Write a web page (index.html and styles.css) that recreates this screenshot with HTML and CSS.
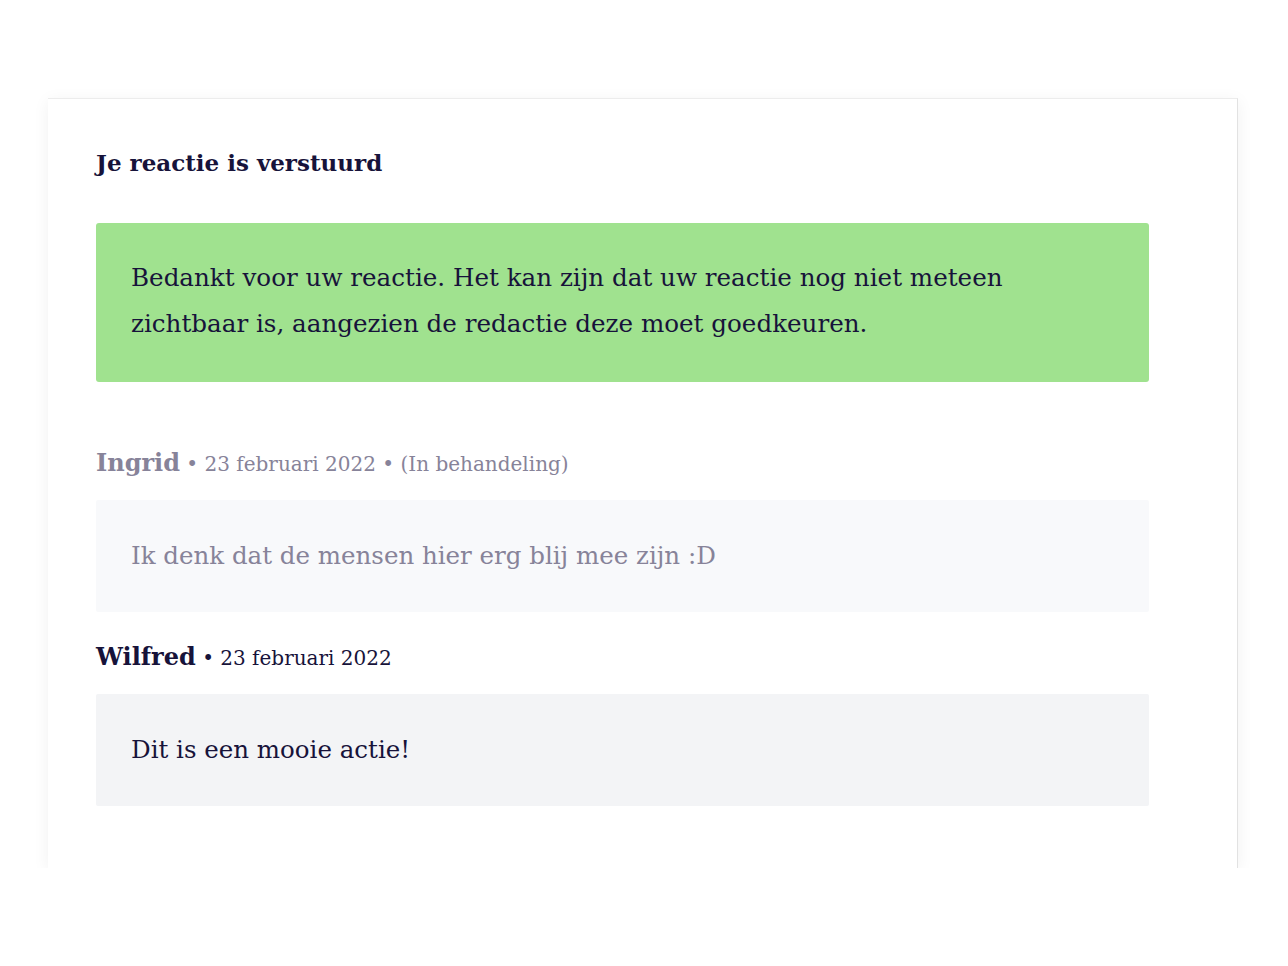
FILE: index.html
```html
<!DOCTYPE html>
<html lang="nl">
<head>
    <meta charset="UTF-8">
    <meta name="viewport" content="width=device-width, initial-scale=1.0">
    <title>Reacties</title>
    <link rel="stylesheet" href="styles.css">
</head>
<body>
    <div class="card">
        <h2 class="card-title">Je reactie is verstuurd</h2>

        <div class="notice">
            <p>Bedankt voor uw reactie. Het kan zijn dat uw reactie nog niet meteen zichtbaar is, aangezien de redactie deze moet goedkeuren.</p>
        </div>

        <div class="comment pending">
            <div class="comment-meta">
                <span class="author">Ingrid</span> &bull; 23 februari 2022 &bull; (In behandeling)
            </div>
            <div class="comment-body">Ik denk dat de mensen hier erg blij mee zijn :D</div>
        </div>

        <div class="comment">
            <div class="comment-meta">
                <span class="author">Wilfred</span> &bull; 23 februari 2022
            </div>
            <div class="comment-body">Dit is een mooie actie!</div>
        </div>
    </div>
</body>
</html>
```

FILE: styles.css
```css
body {
    margin: 0;
    background-color: #fff;
    font-family: "DejaVu Serif", "Liberation Serif", serif;
    color: #17133a;
}
.card {
    position: relative;
    width: 1190px;
    box-sizing: border-box;
    margin: 98px 0 0 48px;
    padding: 49px 88px 62px 48px;
    background-color: #fff;
    border-top: 1px solid #ececec;
    border-right: 1px solid #e2e2e2;
    box-shadow: 0 3px 16px rgba(0, 0, 0, 0.06);
}
.card::after {
    content: "";
    position: absolute;
    left: 218px;
    right: 148px;
    bottom: -2px;
    height: 2px;
    background-color: #ececec;
}
.card-title {
    margin: 0 0 45px;
    font-size: 23px;
    line-height: 30px;
    font-weight: bold;
}
.notice {
    padding: 32px 35px 35px;
    background-color: #a0e28f;
    border-radius: 3px;
    margin-bottom: 63px;
}
.notice p {
    margin: 0;
    font-size: 24.6px;
    line-height: 46px;
}
.comment-meta {
    font-size: 20px;
    line-height: 36px;
    margin-bottom: 18px;
}
.comment-meta .author {
    font-size: 24px;
    font-weight: bold;
}
.comment-body {
    padding: 36px 35px;
    font-size: 24.5px;
    line-height: 40px;
    background-color: #f3f4f6;
    border-radius: 2px;
}
.comment + .comment {
    margin-top: 27px;
}
.pending .comment-meta,
.pending .comment-body {
    color: #878399;
}
.pending .comment-body {
    background-color: #f8f9fb;
}
```
